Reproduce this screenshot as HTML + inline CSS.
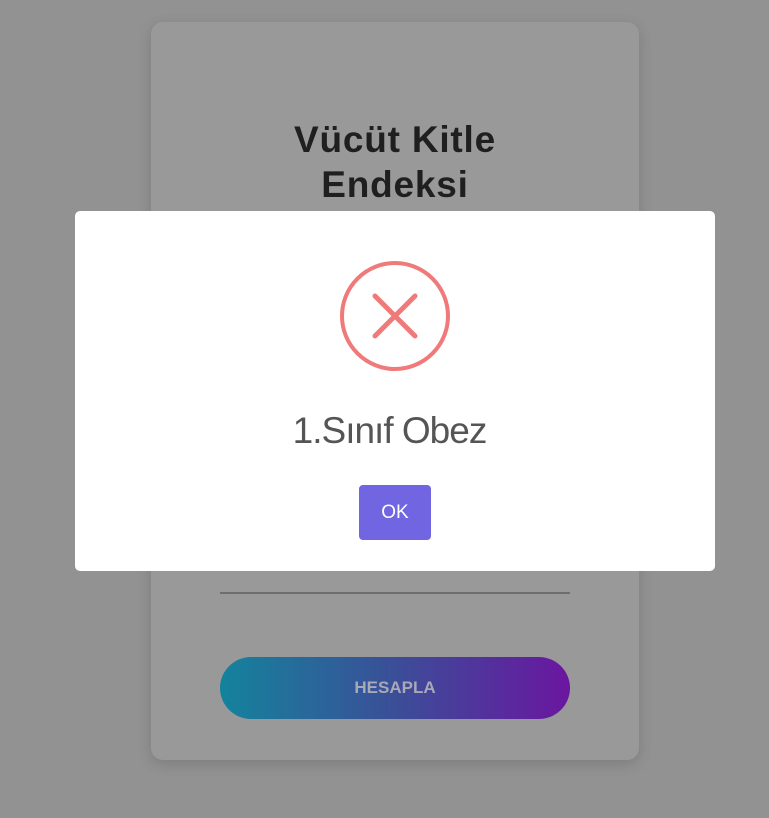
<!DOCTYPE html>
<html><head><style>
body{margin:0;width:769px;height:818px;background:#929292;font-family:"Liberation Sans",sans-serif;position:relative;overflow:hidden}
.card{position:absolute;left:151px;top:22px;width:488px;height:738px;background:#999;border-radius:12px;box-shadow:0 4px 14px rgba(0,0,0,.15)}
h1{position:absolute;left:151px;top:117px;width:488px;margin:0;text-align:center;font-size:37px;line-height:45px;font-weight:bold;color:#1f1f1f;letter-spacing:0.8px}
.line{position:absolute;left:220px;top:592px;width:350px;height:2px;background:#6e6e6e}
.btn{position:absolute;left:220px;top:657px;width:350px;height:62px;border-radius:31px;background:linear-gradient(90deg,#14839c,#3b4e98 50%,#6a16a0);color:#a8a8b8;text-align:center;line-height:62px;font-size:17px;font-weight:bold}
.modal{position:absolute;left:75px;top:211px;width:640px;height:360px;background:#fff;border-radius:5px}
.msg{position:absolute;left:5px;top:410px;width:769px;text-align:center;font-size:37px;color:#555;letter-spacing:-1px}
.ok{position:absolute;left:359px;top:485px;width:72px;height:55px;background:#7165e2;border-radius:4px;color:#fff;font-size:19px;text-align:center;line-height:55px}
</style></head><body>
<div class="card"></div>
<h1>Vücüt Kitle<br>Endeksi</h1>
<div class="line"></div>
<div class="btn">HESAPLA</div>
<div class="modal"></div>
<svg style="position:absolute;left:339px;top:260px" width="112" height="112"><circle cx="56" cy="56" r="53" fill="none" stroke="#f07a7a" stroke-width="4"/><path d="M36 36L76 76M76 36L36 76" stroke="#f07a7a" stroke-width="5" stroke-linecap="round"/></svg>
<div class="msg">1.Sınıf Obez</div>
<div class="ok">OK</div>
</body></html>
